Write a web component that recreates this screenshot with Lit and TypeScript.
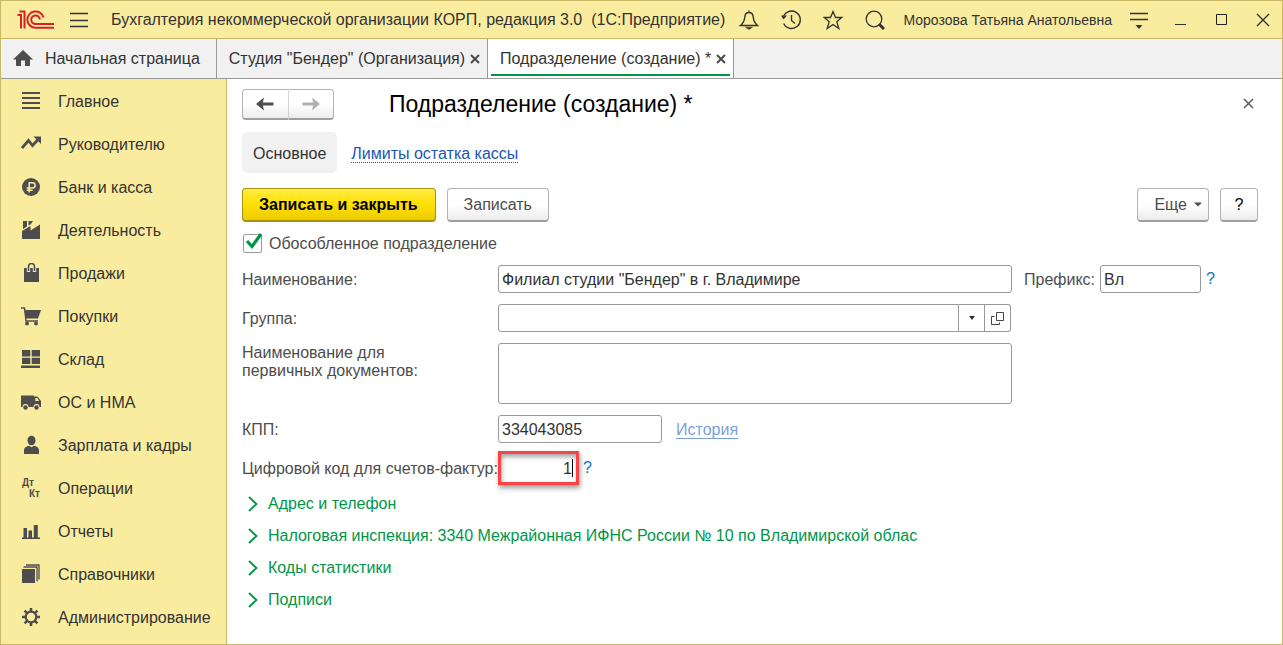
import { LitElement, html, css, svg } from "lit";
import { customElement, state } from "lit/decorators.js";

const sectionIcons: Record<string, unknown> = {
  main: svg`<path d="M1 2h18M1 7h18M1 12h18M1 17h18" stroke="#4d4d4d" stroke-width="2.2" fill="none"/>`,
  chief: svg`<path d="M1 14 7.500 6.500l4 5 6-6.500" stroke="#4d4d4d" stroke-width="2.800" fill="none"/><path d="M12.500 2.500H20V10z"/>`,
  bank: svg`<circle cx="10" cy="10" r="9"/><path d="M8.200 15.500V5.700h3.300a2.600 2.600 0 0 1 0 5.300H5.600M5.600 13.200h6" stroke="#faec9f" stroke-width="1.500" fill="none"/>`,
  activity: svg`<path d="M1 19V11L9.500 6v4.500L19 4.500V19zM2 1h4v5.500L2 9zM7.500 1H12L9.500 4.500 7.500 5.500z"/>`,
  sales: svg`<path d="M3 5h15v14H3z"/><path d="M7.500 9V4.500a3 3 0 0 1 6 0V9" stroke="#faec9f" stroke-width="3.400" fill="none"/><path d="M7.500 8V3.500a3 3 0 0 1 6 0V8" stroke="#4d4d4d" stroke-width="1.500" fill="none"/>`,
  purchases: svg`<path d="M3.500 4H20l-3 8.500H4.500z"/><path d="M0 2h3.500l1.500 13h12" stroke="#4d4d4d" stroke-width="1.400" fill="none"/><circle cx="6" cy="17.500" r="1.900"/><circle cx="15" cy="17.500" r="1.900"/>`,
  stock: svg`<path d="M1 1h8.300v6.500H1zM10.700 1H19v6.500h-8.300zM1 8.800h8.300V15H1zM10.700 8.800H19V15h-8.300zM0 16.500h19V19H0z"/>`,
  assets: svg`<path d="M0 3.500h13v1h3.500L20 9v6H0z"/><path d="M14.300 6h2l1.800 3h-3.800z" fill="#faec9f"/><circle cx="4.500" cy="15" r="3" fill="#faec9f"/><circle cx="15.500" cy="15" r="3" fill="#faec9f"/><circle cx="4.500" cy="15.500" r="2.200"/><circle cx="15.500" cy="15.500" r="2.200"/>`,
  salary: svg`<ellipse cx="10.500" cy="5.500" rx="4" ry="4.800"/><path d="M3 19v-3.500c0-3 2.500-4.200 5-4.700l2.500 1.500 2.500-1.500c2.500.5 5 1.700 5 4.700V19z"/>`,
  operations: svg`<text x="1" y="8" class="glyph">Дт</text><text x="8" y="19" class="glyph">Кт</text>`,
  reports: svg`<path d="M1 16.500h18V18H1zM2.500 7H6v10H2.500zM7.500 9.500H11v7.500H7.500zM12.800 4h4v13h-4z"/>`,
  catalogs: svg`<path d="M1 5h13v14H1z"/><path d="M2.500 3h13.500V17.500M5 1h13V15.500" stroke="#4d4d4d" stroke-width="1.300" fill="none"/>`,
  admin: svg`<circle cx="10" cy="10" r="5.300" fill="none" stroke="#4d4d4d" stroke-width="2.200"/><path d="M10 1v3.500M10 15.500V19M1 10h3.500M15.500 10H19M3.600 3.600 6.100 6.100M13.900 13.900l2.500 2.500M3.600 16.400l2.500-2.500M13.900 6.100l2.500-2.500" stroke="#4d4d4d" stroke-width="2.600" fill="none"/>`,
};

const sections: [string, string][] = [
  ["main", "Главное"],
  ["chief", "Руководителю"],
  ["bank", "Банк и касса"],
  ["activity", "Деятельность"],
  ["sales", "Продажи"],
  ["purchases", "Покупки"],
  ["stock", "Склад"],
  ["assets", "ОС и НМА"],
  ["salary", "Зарплата и кадры"],
  ["operations", "Операции"],
  ["reports", "Отчеты"],
  ["catalogs", "Справочники"],
  ["admin", "Администрирование"],
];

const groups = [
  "Адрес и телефон",
  "Налоговая инспекция: 3340 Межрайонная ИФНС России № 10 по Владимирской облас",
  "Коды статистики",
  "Подписи",
];

const cross = html`<svg width="10" height="10" viewBox="0 0 10 10"><path d="M1 1l8 8M9 1L1 9" stroke="#4a4a4a" stroke-width="2"/></svg>`;

const base = css`
  :host {
    box-sizing: border-box;
    font-family: "Liberation Sans", Arial, sans-serif;
    font-size: 16px;
    line-height: 18px;
    color: #333;
  }
  *,
  *::before {
    box-sizing: border-box;
  }
  button,
  input,
  textarea {
    font: inherit;
    color: inherit;
    margin: 0;
  }
  button {
    padding: 0;
    border: 0;
    background: none;
    white-space: nowrap;
  }
  svg {
    display: block;
    flex: none;
  }
`;

@customElement("app-header")
class AppHeader extends LitElement {
  static styles = [
    base,
    css`
      :host {
        display: flex;
        align-items: center;
        height: 38px;
        padding: 0 12px 0 16px;
        background: #faec9f;
        border-bottom: 1px solid #c9b967;
        white-space: nowrap;
      }
      .logo {
        margin-right: 16px;
      }
      .title {
        margin-left: 23px;
        flex: 1;
        min-width: 0;
      }
      .tools,
      .window {
        display: flex;
        align-items: center;
      }
      .tools {
        gap: 22px;
      }
      .window {
        gap: 28px;
        margin-left: 26px;
      }
      .user {
        font-size: 14px;
        margin: 0 18px;
      }
    `,
  ];

  render() {
    return html`
      <svg class="logo" width="37" height="20" viewBox="0 0 37 20" fill="none" stroke="#d92128" stroke-width="2">
        <path d="M.500 5h3.500v13.500M2.500 1.500h5v17" />
        <path d="M26.500 7.500A8.200 8.200 0 1 0 19 17.800H37M22.800 9.500a4.300 4.300 0 1 0-4 4.500H37" />
      </svg>
      <button aria-label="Главное меню">
        <svg width="18" height="18" viewBox="0 0 18 18"><path d="M0 2.500h18M0 9.500h18M0 15.500h18" stroke="#333" stroke-width="1.300" /></svg>
      </button>
      <span class="title">Бухгалтерия некоммерческой организации КОРП, редакция 3.0&nbsp; (1С:Предприятие)</span>
      <div class="tools">
        <button aria-label="Оповещения">
          <svg width="20" height="20" viewBox="0 0 20 20"><path d="M10 .500v2M10 2.500c-2.700 0-4 1.700-4.200 4.500C5.500 11 4.500 13 1.500 15.500h17c-3-2.500-4-4.500-4.300-8.500C14 4.200 12.700 2.500 10 2.500z" fill="none" stroke="#333" stroke-width="1.400" /><path d="M6.500 17.200h7L10 19.500z" fill="#333" stroke="#333" stroke-width=".5" /></svg>
        </button>
        <button aria-label="История">
          <svg width="20" height="20" viewBox="0 0 20 20"><path d="M2.200 7.500a8.700 8.700 0 1 1 .5 6M10.500 5v5.500l3.500 3" fill="none" stroke="#333" stroke-width="1.400" /><path d="M0 5.500h6l-3.500 4z" fill="#333" /></svg>
        </button>
        <button aria-label="Избранное">
          <svg width="20" height="20" viewBox="0 0 20 20"><path d="M10 1.500l2.500 6h6.300l-5 4.300 2 6.700-5.800-4-5.800 4 2-6.700-5-4.300h6.300z" fill="none" stroke="#333" stroke-width="1.300" /></svg>
        </button>
        <button aria-label="Поиск">
          <svg width="20" height="20" viewBox="0 0 20 20"><circle cx="9" cy="9" r="7.800" fill="none" stroke="#333" stroke-width="1.300" /><path d="M14 14l5 5" stroke="#333" stroke-width="3" /></svg>
        </button>
      </div>
      <span class="user">Морозова Татьяна Анатольевна</span>
      <button aria-label="Сервис">
        <svg width="18" height="18" viewBox="0 0 18 18"><path d="M0 2.500h18M0 8.500h18" stroke="#333" stroke-width="1.400" /><path d="M5.500 14h7L9 18z" fill="#333" /></svg>
      </button>
      <div class="window">
        <button aria-label="Свернуть">
          <svg width="14" height="12" viewBox="0 0 14 12"><path d="M1 10.500h11" stroke="#333" /></svg>
        </button>
        <button aria-label="Развернуть">
          <svg width="12" height="12" viewBox="0 0 12 12"><path d="M.500.500h10v10H.500z" fill="none" stroke="#222" /></svg>
        </button>
        <button aria-label="Закрыть">
          <svg width="14" height="14" viewBox="0 0 14 14"><path d="M1 1l12 12M13 1L1 13" stroke="#333" stroke-width="1.400" /></svg>
        </button>
      </div>
    `;
  }
}

@customElement("app-tabs")
class AppTabs extends LitElement {
  static styles = [
    base,
    css`
      :host {
        display: flex;
        height: 40px;
        background: #f1f1f1;
        border-bottom: 1px solid #999;
        white-space: nowrap;
      }
      .tab {
        display: flex;
        align-items: center;
        gap: 5px;
        padding: 0 7px 0 12px;
        border-right: 1px solid #999;
      }
      .home {
        gap: 12px;
        padding-right: 16px;
      }
      .active {
        position: relative;
        background: #fff;
      }
      .active::before {
        content: "";
        position: absolute;
        left: 3px;
        right: 3px;
        bottom: 2px;
        height: 2px;
        background: #009646;
      }
    `,
  ];

  render() {
    return html`
      <div class="tab home">
        <svg width="20" height="20" viewBox="0 0 20 20" fill="#4d4d4d"><path d="M10 1l10 9.500h-3V17h-5v-5.500H8V17H3v-6.500H0z" /></svg>
        <button>Начальная страница</button>
      </div>
      <div class="tab">
        <button>Студия "Бендер" (Организация)</button>
        <button aria-label="Закрыть вкладку">${cross}</button>
      </div>
      <div class="tab active">
        <button>Подразделение (создание) *</button>
        <button aria-label="Закрыть вкладку">${cross}</button>
      </div>
    `;
  }
}

@customElement("app-sidebar")
class AppSidebar extends LitElement {
  static styles = [
    base,
    css`
      :host {
        display: block;
        flex: none;
        width: 226px;
        background: #faec9f;
        border-right: 1px solid #c9b967;
      }
      .item {
        display: flex;
        align-items: center;
        gap: 17px;
        height: 43px;
        padding-left: 20px;
        color: inherit;
        text-decoration: none;
        white-space: nowrap;
      }
      .item span {
        padding-top: 2px;
      }
      .glyph {
        font: bold 10px "Liberation Sans", Arial, sans-serif;
      }
    `,
  ];

  render() {
    return html`<nav>
      ${sections.map(
        ([id, label]) => html`<a class="item" href="#${id}">
          <svg width="20" height="20" viewBox="0 0 20 20" fill="#4d4d4d">${sectionIcons[id]}</svg>
          <span>${label}</span>
        </a>`
      )}
    </nav>`;
  }
}

@customElement("department-form")
class DepartmentForm extends LitElement {
  @state() private separate = true;

  static styles = [
    base,
    css`
      :host {
        display: block;
        flex: 1;
        min-width: 0;
        padding: 10px 24px 16px 15px;
        background: #fff;
        color: #4d4d4d;
      }
      .heading,
      .commands,
      .views,
      .cell,
      .flag {
        display: flex;
        align-items: center;
      }
      .history {
        display: flex;
        width: 92px;
        height: 31px;
        margin-right: 55px;
      }
      .btn {
        display: flex;
        align-items: center;
        justify-content: center;
        height: 34px;
        border: 1px solid #b3b3b3;
        border-bottom: 2px solid #9e9e9e;
        border-radius: 4px;
        background: linear-gradient(#fff 50%, #ececec);
      }
      .history .btn {
        flex: 1;
        height: auto;
      }
      .history .btn:first-child {
        border-right-color: #d4d4d4;
        border-radius: 4px 0 0 4px;
      }
      .history .btn:last-child {
        border-left: 0;
        border-radius: 0 4px 4px 0;
      }
      h1 {
        flex: 1;
        margin: 0;
        padding-bottom: 2px;
        font-size: 23px;
        line-height: 26px;
        font-weight: 400;
        color: #000;
      }
      .close {
        margin-right: 4px;
        padding-bottom: 2px;
      }
      .views {
        gap: 14px;
        margin: 12px 0 15px;
      }
      .view {
        height: 41px;
        padding: 2px 11px 0;
        border-radius: 5px;
        background: #f1f1f1;
        color: #333;
      }
      .link {
        margin-top: 2px;
        color: #1a56b8;
        text-decoration: none;
        border-bottom: 1px dotted #1a56b8;
        line-height: 17px;
      }
      .commands {
        gap: 11px;
      }
      .primary {
        padding: 0 17px 0 16px;
        font-weight: 700;
        color: #000;
        border-color: #a8930a;
        background: linear-gradient(#ffec45, #ffe000 50%, #ebcb00);
      }
      .plain {
        padding: 0 16px;
      }
      .more {
        gap: 7px;
        margin-left: auto;
        padding: 0 6px 0 16px;
      }
      .help {
        width: 38px;
        color: #000;
      }
      .flag {
        gap: 7px;
        height: 19px;
        margin: 12px 0;
        padding-left: 1px;
      }
      .check {
        position: relative;
        display: flex;
      }
      .check input {
        appearance: none;
        width: 19px;
        height: 19px;
        border: 1px solid #999;
        border-radius: 2px;
        background: #fff;
      }
      .mark {
        position: absolute;
        left: 2px;
        top: -2px;
        pointer-events: none;
      }
      .fields {
        display: grid;
        grid-template-columns: 256px minmax(0, 1fr) 246px;
        row-gap: 11px;
        align-items: center;
      }
      .fields > * {
        min-width: 0;
      }
      .fields label {
        padding-top: 2px;
        white-space: nowrap;
      }
      .fields > .top {
        align-self: start;
        width: 180px;
        padding-top: 1px;
        white-space: normal;
      }
      .start {
        grid-column: 1;
      }
      .box {
        display: block;
        width: 100%;
        height: 28px;
        padding: 2px 3px 0;
        border: 1px solid #999;
        border-radius: 3px;
        background: #fff;
        color: #333;
        outline: none;
      }
      .area {
        height: 61px;
        resize: none;
      }
      .combo {
        display: flex;
        margin-right: 1px;
      }
      .combo .box {
        flex: 1;
        min-width: 0;
        border-radius: 3px 0 0 3px;
      }
      .side {
        display: flex;
        align-items: center;
        justify-content: center;
        flex: none;
        width: 26px;
        border: 1px solid #999;
        border-left: 0;
      }
      .side:last-child {
        border-radius: 0 3px 3px 0;
      }
      .prefix {
        gap: 5px;
        padding-left: 12px;
      }
      .prefix .box {
        width: 101px;
      }
      .hint {
        color: #0b74bf;
      }
      .kpp {
        gap: 14px;
      }
      .kpp .box {
        width: 164px;
      }
      .past {
        margin-top: 2px;
        color: #7a9fdc;
        text-decoration: none;
        border-bottom: 1px solid #7a9fdc;
        line-height: 17px;
      }
      .code {
        gap: 4px;
        height: 28px;
      }
      .marked {
        display: flex;
        align-items: center;
        flex: none;
        width: 81px;
        height: 34px;
        padding-right: 3px;
        border: 3px solid #fb4346;
        background: #fff;
        box-shadow: 1px 3px 5px rgba(0, 0, 0, 0.4), inset 1px 3px 4px rgba(0, 0, 0, 0.35);
      }
      .marked input {
        width: 100%;
        min-width: 0;
        padding: 2px 0 0;
        border: 0;
        outline: none;
        background: transparent;
        text-align: right;
        color: #333;
      }
      .caret {
        flex: none;
        width: 1px;
        height: 18px;
        background: #000;
      }
      .groups {
        margin-top: 6px;
      }
      .group {
        display: flex;
        align-items: center;
        gap: 10px;
        height: 32px;
        padding-left: 6px;
        color: #009646;
      }
    `,
  ];

  render() {
    return html`
      <div class="heading">
        <div class="history">
          <button class="btn" aria-label="Назад">
            <svg width="18" height="14" viewBox="0 0 18 14"><path d="M6 7h11.500" stroke="#4d4d4d" stroke-width="3" /><path d="M0 7l8-6.500L6.500 7 8 13.500z" fill="#4d4d4d" /></svg>
          </button>
          <button class="btn" aria-label="Вперед">
            <svg width="18" height="14" viewBox="0 0 18 14"><path d="M.500 7H12" stroke="#b0b0b0" stroke-width="3" /><path d="M18 7l-8-6.500L11.500 7 10 13.500z" fill="#b0b0b0" /></svg>
          </button>
        </div>
        <h1>Подразделение (создание) *</h1>
        <button class="close" aria-label="Закрыть форму">
          <svg width="11" height="11" viewBox="0 0 11 11"><path d="M1 1l9 9M10 1l-9 9" stroke="#5a5a5a" stroke-width="1.500" /></svg>
        </button>
      </div>
      <div class="views">
        <button class="view">Основное</button>
        <a class="link" href="#limits">Лимиты остатка кассы</a>
      </div>
      <div class="commands">
        <button class="btn primary">Записать и закрыть</button>
        <button class="btn plain">Записать</button>
        <button class="btn more">
          Еще
          <svg width="8" height="5" viewBox="0 0 8 5"><path d="M0 .500h8L4 4.500z" fill="#4d4d4d" /></svg>
        </button>
        <button class="btn help">?</button>
      </div>
      <div class="flag">
        <span class="check">
          <input id="separate" type="checkbox" .checked=${this.separate}
            @change=${(e: Event) => (this.separate = (e.target as HTMLInputElement).checked)} />
          ${this.separate
            ? html`<svg class="mark" width="18" height="18" viewBox="0 0 18 18"><path d="M2 9l5 5.500L16 2" fill="none" stroke="#009646" stroke-width="3.200" /></svg>`
            : ""}
        </span>
        <label for="separate">Обособленное подразделение</label>
      </div>
      <div class="fields">
        <label for="name">Наименование:</label>
        <input id="name" class="box" type="text" value='Филиал студии "Бендер" в г. Владимире' />
        <div class="cell prefix">
          <label for="prefix">Префикс:</label>
          <input id="prefix" class="box" type="text" value="Вл" />
          <button class="hint" aria-label="Справка">?</button>
        </div>

        <label class="start" for="parent">Группа:</label>
        <div class="combo">
          <input id="parent" class="box" type="text" />
          <button class="side" aria-label="Выбрать из списка">
            <svg width="8" height="4" viewBox="0 0 8 4"><path d="M1 0h6L4 4z" fill="#333" /></svg>
          </button>
          <button class="side" aria-label="Открыть">
            <svg width="13" height="13" viewBox="0 0 13 13" fill="none" stroke="#444"><path d="M5.500.500h7v8h-7zM3.500 4.500h-3v8h8v-2" /></svg>
          </button>
        </div>

        <label class="start top" for="docname">Наименование для первичных документов:</label>
        <textarea id="docname" class="box area"></textarea>

        <label class="start" for="kpp">КПП:</label>
        <div class="cell kpp">
          <input id="kpp" class="box" type="text" value="334043085" />
          <a class="past" href="#history">История</a>
        </div>

        <label class="start" for="code">Цифровой код для счетов-фактур:</label>
        <div class="cell code">
          <span class="marked">
            <input id="code" type="text" inputmode="numeric" value="1" />
            <span class="caret"></span>
          </span>
          <button class="hint" aria-label="Справка">?</button>
        </div>
      </div>
      <div class="groups">
        ${groups.map(
          (label) => html`<button class="group" aria-expanded="false">
            <svg width="10" height="16" viewBox="0 0 10 16"><path d="M1 1l7.500 7L1 15" fill="none" stroke="#009646" stroke-width="1.800" /></svg>
            ${label}
          </button>`
        )}
      </div>
    `;
  }
}

@customElement("app-root")
class AppRoot extends LitElement {
  static styles = [
    base,
    css`
      :host {
        display: flex;
        flex-direction: column;
        min-height: 100vh;
        border: 1px solid #c9b967;
      }
      .body {
        display: flex;
        flex: 1;
      }
    `,
  ];

  render() {
    return html`
      <app-header></app-header>
      <app-tabs></app-tabs>
      <div class="body">
        <app-sidebar></app-sidebar>
        <department-form></department-form>
      </div>
    `;
  }
}
